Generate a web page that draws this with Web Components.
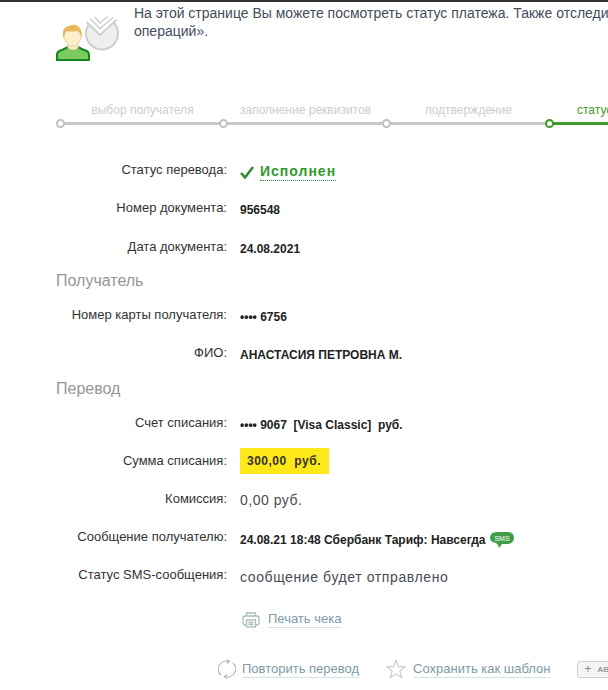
<!DOCTYPE html>
<html>
<head>
<meta charset="utf-8">
<style>
  html, body { margin: 0; padding: 0; background: #fff; overflow: hidden; height: 690px; }
  body { font-family: "Liberation Sans", Arial, sans-serif; color: #333; border-top: 2px solid #333; box-sizing: border-box; }
  pay-page { width: 980px; }
</style>
</head>
<body>
<pay-page>
  <intro-block>На этой странице Вы можете посмотреть статус платежа. Также отследить его можно в разделе «История<br>операций».</intro-block>
  <step-bar></step-bar>
  <info-row label="Статус перевода:" h="38"><status-done>Исполнен</status-done></info-row>
  <info-row label="Номер документа:" h="39"><b>956548</b></info-row>
  <info-row label="Дата документа:" h="32"><b>24.08.2021</b></info-row>
  <section-title>Получатель</section-title>
  <info-row label="Номер карты получателя:" h="38"><b>•••• 6756</b></info-row>
  <info-row label="ФИО:" h="34"><b>АНАСТАСИЯ ПЕТРОВНА М.</b></info-row>
  <section-title>Перевод</section-title>
  <info-row label="Счет списания:" h="38"><b>•••• 9067&nbsp; [Visa Classic]&nbsp; руб.</b></info-row>
  <info-row label="Сумма списания:" h="38"><money-mark>300,00&nbsp; руб.</money-mark></info-row>
  <info-row label="Комиссия:" h="38"><span style="font-size:14px;color:#4a4a55;letter-spacing:.5px;margin-top:-1px">0,00 руб.</span></info-row>
  <info-row label="Сообщение получателю:" h="38"><b>24.08.21 18:48 Сбербанк Тариф: Навсегда</b> <sms-icon></sms-icon></info-row>
  <info-row label="Статус SMS-сообщения:" h="28"><span style="font-size:14px;color:#4a4a55;letter-spacing:.6px">сообщение будет отправлено</span></info-row>
  <action-bar></action-bar>
</pay-page>
<script>
function defineEl(name, html) {
  customElements.define(name, class extends HTMLElement {
    connectedCallback() {
      this.attachShadow({ mode: 'open' });
      this.shadowRoot.innerHTML = typeof html === 'function' ? html(this) : html;
    }
  });
}

defineEl('pay-page', `
  <style>:host { display: block; }</style>
  <slot></slot>`);

defineEl('intro-block', `
  <style>
    :host { display: flex; height: 95px; padding-left: 56px; }
    svg { flex: none; margin-top: 14px; }
    p { margin: 2px 0 0 14px; font-size: 14px; line-height: 18px; color: #444c5a; }
  </style>
  <svg width="64" height="48" viewBox="0 0 64 48">
    <circle cx="46" cy="17.5" r="16" fill="#efefef" stroke="#cfcfcf" stroke-width="2"/>
    <path d="M30 5 L44 19 L61 4 L58 0 H34 Z" fill="#fff"/>
    <path d="M30.500 6 L44 19 L60.500 4" fill="none" stroke="#cfcfcf" stroke-width="2"/>
    <path d="M34 2.500 L44 12.500 L57 1.500" fill="none" stroke="#cfcfcf" stroke-width="1.500"/>
    <path d="M39 1 L44 7 L52 .5" fill="none" stroke="#cfcfcf" stroke-width="1.500"/>
    <path d="M1 44 V39 Q1 35 6 34 L12 31 Q17 36 22 31 L28 34 Q33 35 33 39 V44 Z" fill="#7ccb5f" stroke="#12851f" stroke-width="2"/>
    <path d="M12 25 H22 V32 Q17 36 12 32 Z" fill="#fbe9c0" stroke="#e4d6ad"/>
    <ellipse cx="16.500" cy="20" rx="8.500" ry="10" fill="#fdf0cc" stroke="#e8d9a8"/>
    <path d="M7.500 23 Q5 11 13 10 Q21 6 25 14 Q26.500 18 25.500 23 Q25 16 21 15 Q15 16 11 15 Q8.500 17 7.500 23 Z" fill="#e9b75c"/>
  </svg>
  <p><slot></slot></p>`);

defineEl('step-bar', `
  <style>
    :host { display: grid; grid-template-columns: 163px 163px 163px 163px; height: 65px; margin-left: 56px; font-size: 12px; }
    div { position: relative; color: #cdcdcd; text-align: center; padding: 6px 0 0 10px; box-sizing: border-box; }
    div::before { content: ""; position: absolute; left: 4px; right: -4px; top: 25px; height: 3px; background: #c8c8c8; }
    div::after { content: ""; position: absolute; left: 0; top: 22px; width: 5px; height: 5px; border: 2px solid #c4c2ba; border-radius: 50%; background: #fff; }
    .on { color: #3f9a2c; text-align: left; padding-left: 32px; }
    .on::before { background: #3f9a2c; }
    .on::after { border-color: #3f9a2c; }
  </style>
  <div>выбор получателя</div><div>заполнение реквизитов</div><div>подтверждение</div><div class="on">статус</div>`);

defineEl('info-row', el => `
  <style>
    :host { display: flex; height: ${el.getAttribute('h')}px; align-items: flex-start; }
    .l { width: 227px; text-align: right; font-size: 13px; line-height: 16px; color: #333; flex: none; }
    .v { margin: 2px 0 0 13px; font-size: 12px; line-height: 16px; color: #222; flex: none; display: flex; align-items: center; }
  </style>
  <div class="l">${el.getAttribute('label')}</div>
  <div class="v"><slot></slot></div>`);

defineEl('status-done', `
  <style>
    :host { display: inline-flex; align-items: center; margin-top: -1px; color: #2f9a2e; font-size: 14px; font-weight: bold; letter-spacing: 1px; }
    svg { margin-right: 6px; }
    span { border-bottom: 1px dotted #2f8f2e; line-height: 16px; padding-bottom: 1px; }
  </style>
  <svg width="14" height="13" viewBox="0 0 14 13"><path d="M1 7 L5 11.500 L13 1" fill="none" stroke="#2f8f2e" stroke-width="2.600"/></svg>
  <span><slot></slot></span>`);

defineEl('money-mark', `
  <style>
    :host { display: inline-block; margin-top: -7px; background: #ffe81a; padding: 0 8px 0 7px; height: 26px; line-height: 26px; font-size: 12px; font-weight: bold; color: #333; letter-spacing: .5px; }
  </style>
  <slot></slot>`);

defineEl('sms-icon', `
  <style>:host { display: inline-block; width: 24px; height: 18px; margin: 0 0 0 4px; }</style>
  <svg width="24" height="18" viewBox="0 0 24 18">
    <path d="M6 12 Q0 11 0 7 Q0 1 7 1 H17 Q24 1 24 7 Q24 13 16 13 H12 L9 17 Q9 14 6 12 Z" fill="#3f9d48"/>
    <text x="12" y="9.500" text-anchor="middle" font-family="Liberation Sans" font-size="7" fill="#fff">SMS</text>
  </svg>`);

defineEl('section-title', `
  <style>:host { display: block; height: 36px; margin-left: 56px; font-size: 16px; line-height: 20px; color: #969696; }</style>
  <slot></slot>`);

defineEl('action-bar', `
  <style>
    :host { display: block; font-size: 13px; color: #7e9aa8; }
    a { border-bottom: 1px solid #d5dfe4; line-height: 16px; }
    .print { display: flex; align-items: center; height: 49px; margin: 0 0 10px 242px; gap: 8px; }
    .row { display: flex; align-items: center; height: 30px; margin-left: 218px; }
    .retry { margin-right: 6px; }
    .star { margin: 0 7px 0 27px; }
    .btn { display: inline-flex; align-items: center; margin-left: 27px; height: 15px; width: 120px; border: 1px solid #d0d0d0; border-radius: 3px; background: #f4f4f4; font-size: 8px; font-weight: bold; color: #999; box-sizing: content-box; }
    .btn span:first-child { width: 19px; text-align: center; font-size: 12px; font-weight: normal; color: #888; }
  </style>
  <div class="print">
    <svg width="18" height="16" viewBox="0 0 18 16" fill="none" stroke="#a9bdb8" stroke-width="1.300">
      <rect x="1" y="4" width="16" height="9" rx="2.500"/><path d="M4.500 4 V1 H13.500 V4"/><rect x="4.500" y="8" width="9" height="7" fill="#fff"/><path d="M6.500 10.500 H11.500 M6.500 12.500 H11.500"/>
    </svg>
    <a>Печать чека</a>
  </div>
  <div class="row">
    <svg class="retry" width="18" height="20" viewBox="0 0 18 20" fill="none" stroke="#b5b5b5" stroke-width="1.200">
      <path d="M11 2.500 A8 8 0 0 0 3 16"/><path d="M7 17.500 A8 8 0 0 0 15 4"/><path d="M9 0.500 L11.500 2.500 L9 4.500 M9 15.500 L6.500 17.500 L9 19.500"/>
    </svg>
    <a>Повторить перевод</a>
    <svg class="star" width="20" height="20" viewBox="0 0 20 20" fill="none" stroke="#bdbdbd" stroke-width="1"><path d="M10 1 L12.500 7.800 L19.500 7.800 L13.800 12 L16 19 L10 14.800 L4 19 L6.200 12 L0.500 7.800 L7.500 7.800 Z"/></svg>
    <a>Сохранить как шаблон</a>
    <span class="btn"><span>+</span><span>АВТОПЛАТЕЖ</span></span>
  </div>`);
</script>
</body>
</html>
